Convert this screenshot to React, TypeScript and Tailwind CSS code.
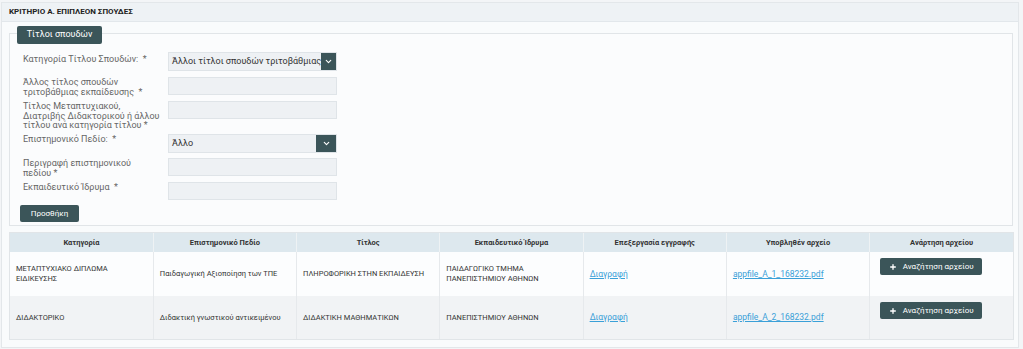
import { Plus, ChevronDown } from "lucide-react";

const rows = [
  {
    category: "ΜΕΤΑΠΤΥΧΙΑΚΟ ΔΙΠΛΩΜΑ ΕΙΔΙΚΕΥΣΗΣ",
    field: "Παιδαγωγική Αξιοποίηση των ΤΠΕ",
    title: "ΠΛΗΡΟΦΟΡΙΚΗ ΣΤΗΝ ΕΚΠΑΙΔΕΥΣΗ",
    school: "ΠΑΙΔΑΓΩΓΙΚΟ ΤΜΗΜΑ ΠΑΝΕΠΙΣΤΗΜΙΟΥ ΑΘΗΝΩΝ",
    file: "appfile_A_1_168232.pdf",
  },
  {
    category: "ΔΙΔΑΚΤΟΡΙΚΟ",
    field: "Διδακτική γνωστικού αντικειμένου",
    title: "ΔΙΔΑΚΤΙΚΗ ΜΑΘΗΜΑΤΙΚΩΝ",
    school: "ΠΑΝΕΠΙΣΤΗΜΙΟΥ ΑΘΗΝΩΝ",
    file: "appfile_A_2_168232.pdf",
  },
];

const headers = [
  "Κατηγορία",
  "Επιστημονικό Πεδίο",
  "Τίτλος",
  "Εκπαιδευτικό Ίδρυμα",
  "Επεξεργασία εγγραφής",
  "Υποβληθέν αρχείο",
  "Ανάρτηση αρχείου",
];

function Label({ children }: { children: React.ReactNode }) {
  return <div className="w-[145px] shrink-0 pt-[1px] text-[9px] leading-[9.5px] text-[#666]">{children}</div>;
}

function TextInput() {
  return <div className="h-[18px] w-[169px] border border-[#dfe4e8] bg-[#eef1f4]" />;
}

function SelectInput({ value }: { value: string }) {
  return (
    <div className="flex h-[19px] w-[169px] border border-[#dfe4e8] bg-[#eef1f4]">
      <div className="flex-1 whitespace-nowrap pl-[3px] text-[9px] leading-[17px] text-[#333]">{value}</div>
      <div className="flex w-[20px] items-center justify-center bg-[#3b5559]">
        <ChevronDown className="h-[9px] w-[9px] text-white" strokeWidth={3} />
      </div>
    </div>
  );
}

export default function App() {
  return (
    <div
      className="h-[349px] w-[1023px] bg-[#f3f5f7] pt-[2px] pl-[1px] pr-[4px]"
      style={{ fontFamily: "Roboto, 'Noto Sans', sans-serif" }}
    >
      <div className="h-[346px] border border-[#e3e7ea] bg-[#f9fbfc]">
        <div className="flex h-[19px] items-center border-b border-[#e2e7eb] bg-[#eef2f5] pl-[7px] text-[8px] font-bold text-[#222]">
          ΚΡΙΤΗΡΙΟ Α. ΕΠΙΠΛΕΟΝ ΣΠΟΥΔΕΣ
        </div>

        <div className="px-[7px] pt-[4px]">
          <div className="relative mt-[7px] h-[193px] w-[1004px] border border-[#e1e5e8] bg-[#fbfcfd] pl-[13px] pt-[18px]">
            <div className="absolute left-[7px] top-[-8px] flex h-[18px] w-[85px] items-center justify-center rounded-[2px] bg-[#3b5559] text-[9px] text-white">
              Τίτλοι σπουδών
            </div>

            <div className="flex flex-col">
              <div className="flex h-[25px] items-start">
                <Label>
                  <span className="relative top-[2px]">Κατηγορία Τίτλου Σπουδών:&nbsp; *</span>
                </Label>
                <SelectInput value="Άλλοι τίτλοι σπουδών τριτοβάθμιας" />
              </div>
              <div className="flex h-[24px] items-start">
                <Label>
                  Άλλος τίτλος σπουδών
                  <br />
                  τριτοβάθμιας εκπαίδευσης&nbsp; *
                </Label>
                <TextInput />
              </div>
              <div className="flex h-[33px] items-start">
                <Label>
                  Τίτλος Μεταπτυχιακού,
                  <br />
                  Διατριβής Διδακτορικού ή άλλου
                  <br />
                  τίτλου ανά κατηγορία τίτλου *
                </Label>
                <TextInput />
              </div>
              <div className="flex h-[24px] items-start">
                <Label>Επιστημονικό Πεδίο:&nbsp; *</Label>
                <SelectInput value="Άλλο" />
              </div>
              <div className="flex h-[24px] items-start">
                <Label>
                  Περιγραφή επιστημονικού
                  <br />
                  πεδίου *
                </Label>
                <TextInput />
              </div>
              <div className="flex h-[23px] items-start">
                <Label>Εκπαιδευτικό Ίδρυμα&nbsp; *</Label>
                <TextInput />
              </div>
            </div>

            <button className="-ml-[3px] block h-[17px] w-[59px] rounded-[2px] bg-[#3b5559] text-[8px] text-white">
              Προσθήκη
            </button>
          </div>

          <div className="mt-[6px] w-[1005px] border border-[#e1e5e8] bg-white">
            <table className="w-full table-fixed border-collapse text-[7.5px] text-[#333]">
              <thead>
                <tr className="h-[19px] bg-[#dde8ee]">
                  {headers.map((h) => (
                    <th key={h} className="border-r border-[#eef2f4] text-center font-bold last:border-r-0">
                      {h}
                    </th>
                  ))}
                </tr>
              </thead>
              <tbody>
                {rows.map((r, i) => (
                  <tr key={r.file} className={i % 2 === 0 ? "h-[44px] bg-[#fcfdfe]" : "h-[43px] bg-[#f1f3f5]"}>
                    <td className="border-r border-[#e6e9ec] px-[6px] leading-[10px]">{r.category}</td>
                    <td className="border-r border-[#e6e9ec] px-[6px]">{r.field}</td>
                    <td className="border-r border-[#e6e9ec] px-[6px]">{r.title}</td>
                    <td className="border-r border-[#e6e9ec] px-[6px] leading-[10px]">{r.school}</td>
                    <td className="border-r border-[#e6e9ec] px-[6px] text-[8.5px]">
                      <a className="text-[#3aa0d8] underline">Διαγραφή</a>
                    </td>
                    <td className="border-r border-[#e6e9ec] px-[6px] text-[8.5px]">
                      <a className="text-[#3aa0d8] underline">{r.file}</a>
                    </td>
                    <td className="px-[10px] pt-[6px] align-top">
                      <button className="flex h-[17px] w-[102px] items-center justify-center gap-[6px] rounded-[2px] bg-[#3b5559] text-[8px] text-white">
                        <Plus className="h-[8px] w-[8px]" strokeWidth={4} />
                        Αναζήτηση αρχείου
                      </button>
                    </td>
                  </tr>
                ))}
              </tbody>
            </table>
          </div>
        </div>
      </div>
    </div>
  );
}
